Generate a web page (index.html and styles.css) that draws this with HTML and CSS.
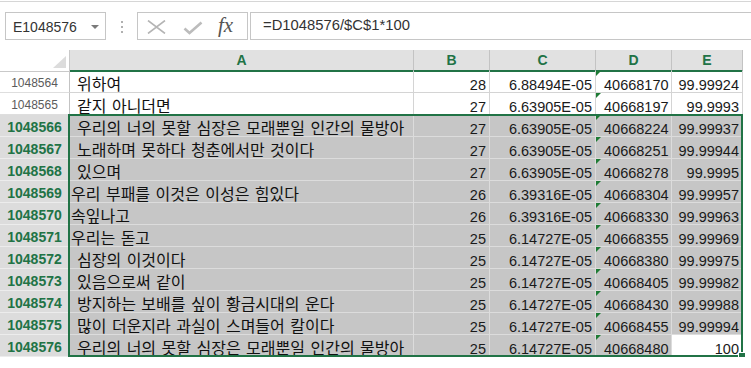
FILE: index.html
```html
<!DOCTYPE html>
<html lang="ko">
<head>
    <meta charset="UTF-8">
    <title>Sheet</title>
    <link rel="stylesheet" href="styles.css">
</head>
<body>
    <div class="formula-bar">
        <div class="name-box">
            <span class="name-text">E1048576</span>
            <span class="drop-arrow"></span>
        </div>
        <div class="grip"><i></i><i></i><i></i></div>
        <div class="fx-box">
            <svg class="icon-cancel" width="19" height="14" viewBox="0 0 19 14">
                <path d="M1 0.5 L18 13.5 M18 0.5 L1 13.5" stroke="#b4b4b4" stroke-width="1.6" fill="none"/>
            </svg>
            <svg class="icon-enter" width="20" height="14" viewBox="0 0 20 14">
                <path d="M1.5 7.5 L6.5 12 L18.5 1.5" stroke="#bcbcbc" stroke-width="2.6" fill="none"/>
            </svg>
            <span class="fx">fx</span>
        </div>
        <div class="formula-input">=D1048576/$C$1*100</div>
    </div>

    <div class="sheet">
        <div class="row head">
            <div class="corner"><span class="corner-tri"></span></div>
            <div class="ch">A</div>
            <div class="ch">B</div>
            <div class="ch">C</div>
            <div class="ch">D</div>
            <div class="ch">E</div>
            <div class="rest"></div>
        </div>
        <div id="rows"></div>
        <div class="selection"><span class="fill-handle"></span></div>
    </div>

    <script>
        // row, text, indented?, B, C, D, E
        const data = [
            [1048564, "위하여", true, 28, "6.88494E-05", 40668170, "99.99924"],
            [1048565, "같지 아니더면", true, 27, "6.63905E-05", 40668197, "99.9993"],
            [1048566, "우리의 너의 못할 심장은 모래뿐일 인간의 물방아", true, 27, "6.63905E-05", 40668224, "99.99937"],
            [1048567, "노래하며 못하다 청춘에서만 것이다", true, 27, "6.63905E-05", 40668251, "99.99944"],
            [1048568, "있으며", true, 27, "6.63905E-05", 40668278, "99.9995"],
            [1048569, "우리 부패를 이것은 이성은 힘있다", false, 26, "6.39316E-05", 40668304, "99.99957"],
            [1048570, "속잎나고", false, 26, "6.39316E-05", 40668330, "99.99963"],
            [1048571, "우리는 돋고", false, 25, "6.14727E-05", 40668355, "99.99969"],
            [1048572, "심장의 이것이다", true, 25, "6.14727E-05", 40668380, "99.99975"],
            [1048573, "있음으로써 같이", true, 25, "6.14727E-05", 40668405, "99.99982"],
            [1048574, "방지하는 보배를 싶이 황금시대의 운다", true, 25, "6.14727E-05", 40668430, "99.99988"],
            [1048575, "많이 더운지라 과실이 스며들어 칼이다", true, 25, "6.14727E-05", 40668455, "99.99994"],
            [1048576, "우리의 너의 못할 심장은 모래뿐일 인간의 물방아", true, 25, "6.14727E-05", 40668480, "100"]
        ];

        const rows = document.getElementById('rows');
        data.forEach(function(d, i) {
            const selected = i >= 2;
            const active = i === data.length - 1;
            const row = document.createElement('div');
            row.className = 'row' + (selected ? ' selected' : '');
            row.innerHTML =
                '<div class="rh">' + d[0] + '</div>' +
                '<div class="cell txt' + (d[2] ? ' indent' : '') + '">' + d[1] + '</div>' +
                '<div class="cell num">' + d[3] + '</div>' +
                '<div class="cell num">' + d[4] + '</div>' +
                '<div class="cell num flag">' + d[5] + '</div>' +
                '<div class="cell num' + (active ? ' active' : '') + '">' + d[6] + '</div>' +
                '<div class="rest"></div>';
            rows.appendChild(row);
        });
    </script>
</body>
</html>
```

FILE: styles.css
```css
body {
    margin: 0;
    background-color: #fff;
    font-family: "Liberation Sans", Arial, sans-serif;
    color: #1a1a1a;
    width: 751px;
    overflow: hidden;
}

.formula-bar {
    margin-top: 1px;
    height: 49px;
    box-sizing: border-box;
    border-top: 1px solid #d6d6d6;
    padding: 10px 0 0 5px;
    display: flex;
    align-items: flex-start;
}

.name-box {
    width: 101px;
    height: 28px;
    box-sizing: border-box;
    border: 1px solid #c6c6c6;
    display: flex;
    align-items: center;
    padding: 0 6px 0 7px;
}

.name-text {
    flex: 1;
    font-size: 14px;
    color: #333;
    padding-top: 1px;
}

.drop-arrow {
    width: 0;
    height: 0;
    border-left: 4px solid transparent;
    border-right: 4px solid transparent;
    border-top: 4px solid #7a7a7a;
    margin-top: 1px;
}

.grip {
    width: 2px;
    margin: 9px 14px 0 15px;
    display: flex;
    flex-direction: column;
    gap: 3px;
}

.grip i {
    display: block;
    width: 2px;
    height: 2px;
    background-color: #b0b0b0;
}

.fx-box {
    width: 111px;
    height: 28px;
    box-sizing: border-box;
    border: 1px solid #c6c6c6;
    display: flex;
    align-items: center;
    padding-left: 9px;
}

.icon-cancel {
    margin-top: 1px;
}

.icon-enter {
    margin-left: 17px;
    margin-top: 3px;
}

.fx {
    margin-left: 15px;
    font-family: "Liberation Serif", serif;
    font-style: italic;
    font-size: 21px;
    color: #555;
    margin-top: -2px;
}

.formula-input {
    flex: 1;
    height: 28px;
    box-sizing: border-box;
    border: 1px solid #c6c6c6;
    border-right: none;
    margin-left: 2px;
    padding: 4px 0 0 12px;
    font-size: 14.8px;
    color: #333;
}

.sheet {
    position: relative;
}

.row {
    display: grid;
    grid-template-columns: 70px 344px 76px 106px 76px 71px 1fr;
    height: 22px;
}

.row > div {
    box-sizing: border-box;
    white-space: nowrap;
}

.head {
    height: 21px;
}

.corner {
    position: relative;
    border-right: 1px solid #c9c9c9;
    border-bottom: 1px solid #c9c9c9;
}

.corner-tri {
    position: absolute;
    right: 3px;
    bottom: 3px;
    width: 0;
    height: 0;
    border-left: 13px solid transparent;
    border-bottom: 12px solid #dcdcdc;
}

.ch {
    background-color: #e1e1e1;
    border-right: 1px solid #c3c3c3;
    border-bottom: 2px solid #217346;
    text-align: center;
    color: #217346;
    font-size: 14px;
    font-weight: bold;
    line-height: 20px;
}

.rh {
    border-right: 1px solid #c3c3c3;
    border-bottom: 1px solid #dedede;
    text-align: center;
    font-size: 12px;
    color: #5b5b5b;
    padding-top: 6px;
    line-height: 13px;
}

.cell {
    border-right: 1px solid #d4d4d4;
    border-bottom: 1px solid #d4d4d4;
}

.txt {
    font-family: "Noto Sans CJK KR", "Liberation Sans", sans-serif;
    font-size: 16px;
    word-spacing: 1px;
    padding: 3px 0 0 1px;
    line-height: 18px;
    color: #111;
}

.txt.indent {
    padding-left: 7px;
}

.num {
    text-align: right;
    font-size: 14.5px;
    padding: 8px 3px 0 0;
    line-height: 13px;
}

.flag {
    position: relative;
    text-align: left;
    padding-left: 8px;
}

.flag::before {
    content: "";
    position: absolute;
    left: 0;
    top: 0;
    border-top: 5px solid #1e7b34;
    border-right: 5px solid transparent;
}

.selected .rh {
    background-color: #dcdcdc;
    border-bottom-color: #ececec;
    color: #217346;
    font-weight: bold;
    font-size: 14px;
    padding-top: 5px;
    line-height: 14px;
}

.selected .cell {
    background-color: #c6c6c6;
    border-color: #dcdcdc;
}

.selected .cell.active {
    background-color: #fff;
}

.selection {
    position: absolute;
    left: 68px;
    top: 64px;
    width: 675px;
    height: 243px;
    box-sizing: border-box;
    border: 2px solid #217346;
    pointer-events: none;
}

.fill-handle {
    position: absolute;
    right: -5px;
    bottom: -5px;
    width: 6px;
    height: 6px;
    background-color: #217346;
    border: 1px solid #fff;
}
```
